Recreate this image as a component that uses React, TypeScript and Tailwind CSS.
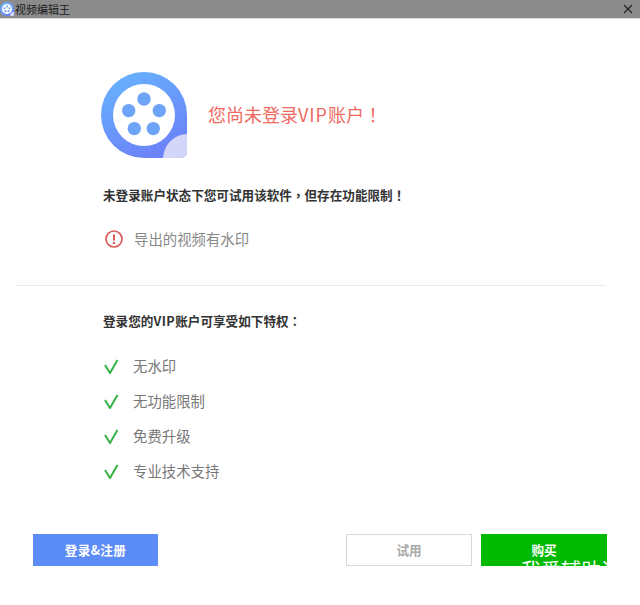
const cjk = "font-['Noto_Sans_CJK_SC','Noto_Sans',sans-serif]";
// centred full-width punctuation, as in the screenshot
const punct = "font-['Noto_Sans_CJK_TC',sans-serif]";

const features = ["无水印", "无功能限制", "免费升级", "专业技术支持"];

function Logo({ size, className }: { size: number; className?: string }) {
  return (
    <svg width={size} height={size} viewBox="0 0 86 86" className={className}>
      <defs>
        <linearGradient id={`logo-${size}`} x1="0.2" y1="0" x2="0.7" y2="1">
          <stop offset="0" stopColor="#66b2fd" />
          <stop offset="1" stopColor="#6c80f8" />
        </linearGradient>
      </defs>
      <path
        d="M43 0a43 43 0 0 1 43 43v37a6 6 0 0 1-6 6H43a43 43 0 0 1 0-86z"
        fill={`url(#logo-${size})`}
      />
      <circle cx="43" cy="43" r="31" fill="#fff" />
      <circle cx="43" cy="27" r="6.7" fill="#6ea4f8" />
      <circle cx="27.700" cy="38.600" r="6.7" fill="#6ea4f8" />
      <circle cx="58.300" cy="38.600" r="6.7" fill="#6ea4f8" />
      <circle cx="33.300" cy="56.600" r="6.7" fill="#6ea4f8" />
      <circle cx="52.300" cy="56.600" r="6.7" fill="#6ea4f8" />
      <path
        d="M86 62v18a6 6 0 0 1-6 6H62a25 25 0 0 1 24-24z"
        fill="#d3d6f8"
      />
    </svg>
  );
}

function Check() {
  return (
    <svg width="16" height="16" viewBox="0 0 16 16" fill="none" className="shrink-0">
      <path d="M1 7l5 8L13.500 2" stroke="#37b044" strokeWidth="2" />
    </svg>
  );
}

export default function App() {
  return (
    <div className={`relative flex h-[605px] w-[640px] flex-col overflow-hidden bg-white ${cjk}`}>
      <div className="flex h-[19px] items-center justify-between border-b border-[#d8d8d8] bg-[#8b8b8b] pr-[7px]">
        <div className="flex items-center gap-px">
          <Logo size={14} />
          <span className="text-[11px] leading-none text-[#1c1c1c]">视频编辑王</span>
        </div>
        <svg width="10" height="10" viewBox="0 0 10 10" stroke="#222" strokeWidth="1.100">
          <path d="M1 1l8 8M9 1l-8 8" />
        </svg>
      </div>

      <div className="ml-[101px] mt-[53px] flex items-center gap-[21px]">
        <Logo size={86} />
        <h1 className="pb-[2px] text-[18px] leading-none font-normal text-[#ee6a60]">
          您尚未登录<span className="tracking-[1px]">VIP</span>账户<span className={punct}>！</span>
        </h1>
      </div>

      <p className="ml-[103px] mt-[29px] text-[12.600px] leading-[16px] font-bold text-[#333]">
        未登录账户状态下您可试用该软件<span className={punct}>，</span>但存在功能限制<span className={punct}>！</span>
      </p>

      <div className="ml-[105px] mt-[26px] flex items-center gap-[11px]">
        <svg width="18" height="18" viewBox="0 0 18 18" fill="none">
          <circle cx="9" cy="9" r="8" stroke="#dc5a5a" strokeWidth="1.700" />
          <path d="M9 4.500v6" stroke="#dc5a5a" strokeWidth="2" />
          <circle cx="9" cy="13" r="1.200" fill="#dc5a5a" />
        </svg>
        <span className="text-[14.400px] leading-[20px] text-[#888]">导出的视频有水印</span>
      </div>

      <hr className="mx-[15px] mt-[36px] w-[591px] border-[#eaeaea]" />

      <p className="ml-[103px] mt-[27px] text-[12.600px] leading-[16px] font-bold text-[#333]">
        登录您的<span className="tracking-[0.5px]">VIP</span>账户可享受如下特权<span className={punct}>：</span>
      </p>

      <ul className="ml-[104px] mt-[27px] flex flex-col gap-[15px]">
        {features.map((item) => (
          <li key={item} className="flex h-[20px] items-center gap-[13px]">
            <Check />
            <span className="text-[14.400px] leading-[20px] text-[#777]">{item}</span>
          </li>
        ))}
      </ul>

      <div className="mt-[53px] flex pl-[33px]">
        <button className="h-[32px] w-[125px] bg-[#5b8cf8] text-[12.600px] font-bold tracking-[0.4px] text-white">登录&amp;注册</button>
        <button className="ml-[188px] h-[32px] w-[126px] border border-[#d9d9d9] bg-white text-[12.600px] font-bold text-[#aaa]">试用</button>
        <button className="relative ml-[9px] h-[32px] w-[126px] overflow-hidden bg-[#00b900] pt-[1px] text-[12.600px] font-bold text-white">
          购买
          <span className="absolute left-[40px] top-[26px] whitespace-nowrap text-[20px] leading-[20px] font-normal">我爱辅助论坛</span>
        </button>
      </div>
    </div>
  );
}
